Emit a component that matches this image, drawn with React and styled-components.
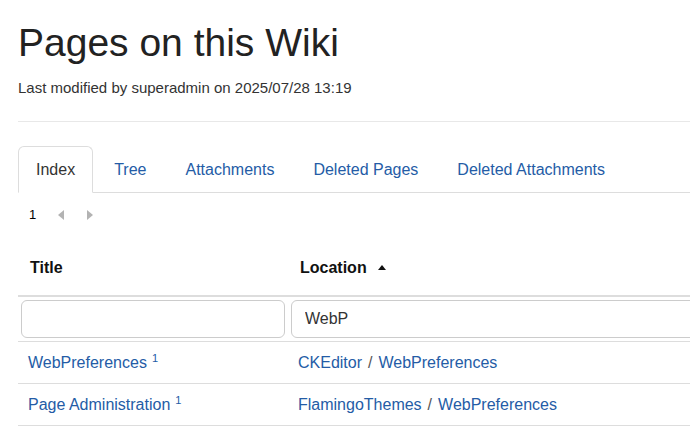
import styled, { createGlobalStyle } from "styled-components"

const GlobalStyle = createGlobalStyle`
    html, body {
        margin: 0;
        padding: 0;
        background: #fff;
        overflow: hidden;
    }
    body {
        font-family: "Liberation Sans", Arial, sans-serif;
        color: #333;
    }
`;

const Page = styled.div`
    padding-left: 18px;
    width: 760px;
`;

const Heading = styled.h1`
    margin: 22px 0 0;
    font-size: 39px;
    font-weight: 400;
    line-height: 1.1;
    color: #222;
`;

const Meta = styled.div`
    margin-top: 13px;
    font-size: 15px;
    line-height: 20px;
    color: #333;
`;

const Rule = styled.hr`
    margin: 23px 0 24px;
    border: 0;
    border-top: 1px solid #e8e8e8;
`;

const Tabs = styled.ul`
    display: flex;
    margin: 0;
    padding: 0;
    list-style: none;
    border-bottom: 1px solid #ddd;
`;

const Tab = styled.li`
    margin: 0 3px -1px 0;
    padding: 12px 17px 11px;
    font-size: 16px;
    line-height: 22px;
    border: 1px solid ${p => (p.$active ? "#ddd" : "transparent")};
    border-bottom-color: ${p => (p.$active ? "#fff" : "transparent")};
    border-radius: 6px 6px 0 0;
    background: ${p => (p.$active ? "#fff" : "transparent")};
    color: ${p => (p.$active ? "#333" : "#245ca6")};
`;

const Pager = styled.div`
    display: flex;
    align-items: center;
    height: 22px;
    margin-top: 11px;
    padding-left: 11px;
    font-size: 13px;
    color: #000;
`;

const PageNum = styled.span`
    margin-right: 22px;
`;

const Arrow = styled.span`
    width: 0;
    height: 0;
    margin-right: 23px;
    border-top: 5px solid transparent;
    border-bottom: 5px solid transparent;
    ${p => (p.$dir === "left"
        ? "border-right: 6px solid #b3b3b3;"
        : "border-left: 6px solid #b3b3b3;")}
`;

const Table = styled.table`
    margin-top: 16px;
    width: 760px;
    table-layout: fixed;
    border-collapse: collapse;
`;

const HeadCell = styled.th`
    padding: 15px 10px 16px 12px;
    font-size: 16px;
    line-height: 22px;
    font-weight: 700;
    text-align: left;
    color: #111;
    border-bottom: 2px solid #ddd;
`;

const SortUp = styled.span`
    display: inline-block;
    width: 0;
    height: 0;
    margin-left: 11px;
    vertical-align: 3px;
    border-left: 4px solid transparent;
    border-right: 4px solid transparent;
    border-bottom: 5px solid #111;
`;

const FilterCell = styled.td`
    padding: 3px;
    border-bottom: 1px solid #ddd;
`;

const FilterInput = styled.input`
    box-sizing: border-box;
    width: 100%;
    height: 38px;
    padding: 0 13px;
    font-family: "Liberation Sans", Arial, sans-serif;
    font-size: 16px;
    color: #333;
    border: 1px solid #ccc;
    border-radius: 6px;
    outline: none;
`;

const Cell = styled.td`
    padding: 10px;
    font-size: 16px;
    line-height: 21px;
    border-bottom: 1px solid #ddd;
    white-space: nowrap;
`;

const Link = styled.a`
    color: #245ca6;
    text-decoration: none;
`;

const Sep = styled.span`
    margin: 0 6px;
    color: #555;
`;

const Count = styled.span`
    position: relative;
    top: -6px;
    margin-left: 5px;
    font-size: 11px;
    line-height: 0;
    color: #245ca6;
`;

const rows = [
    { title: "WebPreferences", space: "CKEditor" },
    { title: "Page Administration", space: "FlamingoThemes" },
];

const tabs = ["Index", "Tree", "Attachments", "Deleted Pages", "Deleted Attachments"];

const App = () => {
    return (
        <Page>
            <GlobalStyle />
            <Heading>Pages on this Wiki</Heading>
            <Meta>Last modified by superadmin on 2025/07/28 13:19</Meta>
            <Rule />
            <Tabs>
                {tabs.map((t, i) => (
                    <Tab key={t} $active={i === 0}>{t}</Tab>
                ))}
            </Tabs>
            <Pager>
                <PageNum>1</PageNum>
                <Arrow $dir="left" />
                <Arrow $dir="right" />
            </Pager>
            <Table>
                <colgroup>
                    <col style={{ width: "270px" }} />
                    <col />
                </colgroup>
                <thead>
                    <tr>
                        <HeadCell>Title</HeadCell>
                        <HeadCell>Location<SortUp /></HeadCell>
                    </tr>
                </thead>
                <tbody>
                    <tr>
                        <FilterCell><FilterInput defaultValue="" /></FilterCell>
                        <FilterCell><FilterInput defaultValue="WebP" /></FilterCell>
                    </tr>
                    {rows.map(r => (
                        <tr key={r.title}>
                            <Cell>
                                <Link href="#">{r.title}</Link>
                                <Count>1</Count>
                            </Cell>
                            <Cell>
                                <Link href="#">{r.space}</Link>
                                <Sep>/</Sep>
                                <Link href="#">WebPreferences</Link>
                            </Cell>
                        </tr>
                    ))}
                </tbody>
            </Table>
        </Page>
    )
}

export default App;
